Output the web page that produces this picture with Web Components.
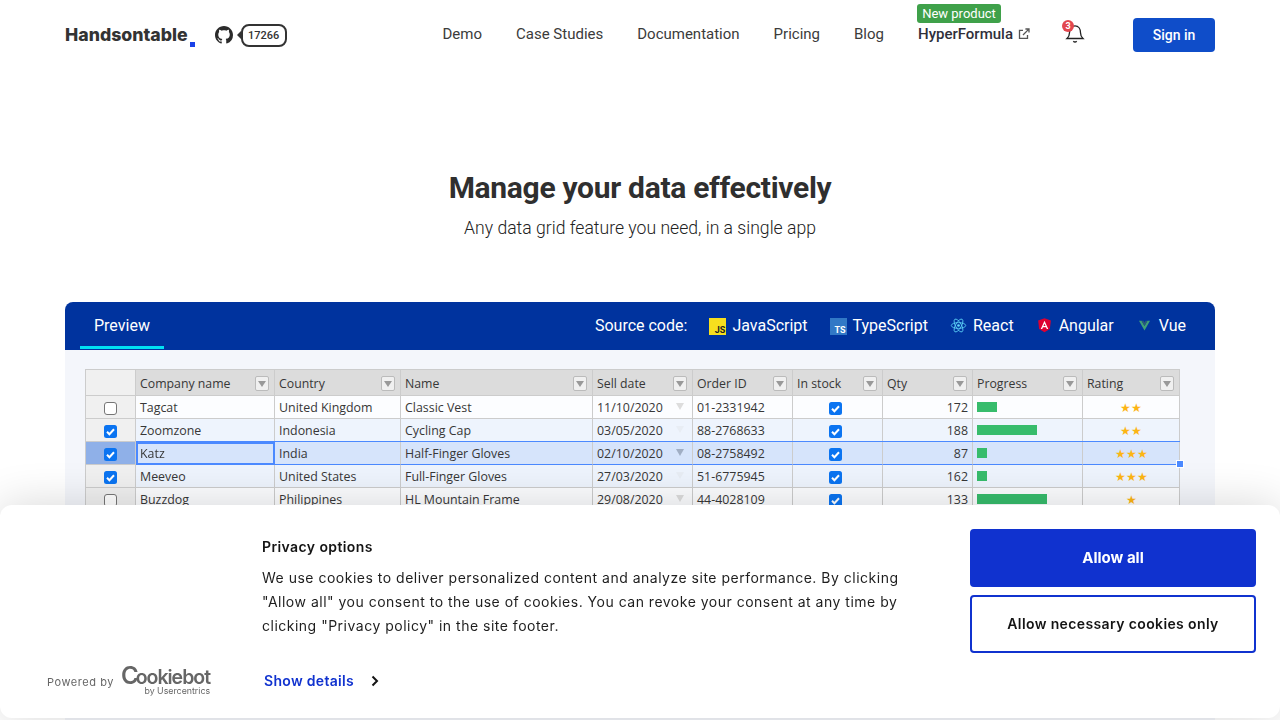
<!DOCTYPE html>
<html lang="en">
<head>
<meta charset="utf-8">
<title>Handsontable</title>
<style>
  html, body { margin: 0; height: 720px; overflow: hidden; background: #fff; }
  body { font-family: Roboto, "Liberation Sans", sans-serif; color: #373737; }
</style>
</head>
<body>
<site-header></site-header>
<hero-title>
  <span slot="title">Manage your data effectively</span>
  <span slot="sub">Any data grid feature you need, in a single app</span>
</hero-title>
<demo-panel>
  <data-grid></data-grid>
</demo-panel>
<cookie-banner></cookie-banner>

<script>
// top navigation
class SiteHeader extends HTMLElement {
  connectedCallback() {
    const shadow = this.attachShadow({ mode: 'open' });
    shadow.innerHTML = `
      <style>
        :host { display: flex; align-items: center; height: 70px; padding: 0 65px; font-family: Roboto, sans-serif; }
        .logo { font: 800 17.7px/22px Inter, sans-serif; color: #333; display: flex; align-items: baseline; }
        .logo i { display: block; align-self: flex-end; width: 5px; height: 5px; background: #1a42e8; margin-left: 2px; margin-bottom: -1px; }
        .gh { display: flex; align-items: center; margin-left: 20px; }
        .gh svg { width: 18px; height: 18px; fill: #2b2b2b; }
        .count { position: relative; box-sizing: border-box; margin-left: 8px; height: 23px; width: 46px; border: 2px solid #333; border-radius: 8px;
          font: 500 11px Roboto, sans-serif; color: #333; display: flex; align-items: center; justify-content: center; }
        .count::before { content: ""; position: absolute; left: -6px; top: 5px; border: 4px solid transparent; border-left: 0; border-right: 4px solid #333; }
        nav { display: flex; align-items: center; gap: 34px; margin-left: auto; font-size: 15px; color: #3b3b3b; padding-bottom: 2px; }
        .hf { position: relative; font-weight: 500; color: #2f2f3a; display: flex; align-items: center; gap: 5px; }
        .hf svg { width: 12px; height: 12px; }
        .new { position: absolute; left: -1px; top: -21px; height: 19px; width: 84px; background: #3fa14a; color: #fff; border-radius: 3px;
          font-size: 13px; font-weight: 400; line-height: 19px; text-align: center; }
        .bell { position: relative; width: 20px; height: 20px; margin: -2px 0 0 1px; }
        .bell svg { display: block; width: 20px; height: 20px; }
        .bell b { position: absolute; left: -3px; top: -3px; width: 12px; height: 12px; border-radius: 50%; background: #e2474f; color: #fff;
          font: 700 9px/12px Roboto, sans-serif; text-align: center; }
        .signin { margin-left: 48px; width: 82px; height: 34px; background: #0f4dc9; color: #fff; border-radius: 4px; font-size: 14px; font-weight: 500;
          display: flex; align-items: center; justify-content: center; }
      </style>
      <div class="logo">Handsontable<i></i></div>
      <div class="gh">
        <svg viewBox="0 0 16 16"><path d="M8 0C3.58 0 0 3.58 0 8c0 3.54 2.29 6.53 5.47 7.59.4.07.55-.17.55-.38 0-.19-.01-.82-.01-1.49-2.01.37-2.53-.49-2.69-.94-.09-.23-.48-.94-.82-1.13-.28-.15-.68-.52-.01-.53.63-.01 1.08.58 1.23.82.72 1.21 1.87.87 2.33.66.07-.52.28-.87.51-1.07-1.78-.2-3.64-.89-3.64-3.95 0-.87.31-1.59.82-2.15-.08-.2-.36-1.02.08-2.12 0 0 .67-.21 2.2.82.64-.18 1.32-.27 2-.27.68 0 1.36.09 2 .27 1.53-1.04 2.2-.82 2.2-.82.44 1.1.16 1.92.08 2.12.51.56.82 1.27.82 2.15 0 3.07-1.87 3.75-3.65 3.95.29.25.54.73.54 1.48 0 1.07-.01 1.93-.01 2.2 0 .21.15.46.55.38A8.013 8.013 0 0016 8c0-4.42-3.58-8-8-8z"/></svg>
        <div class="count">17266</div>
      </div>
      <nav>
        <span>Demo</span>
        <span>Case Studies</span>
        <span>Documentation</span>
        <span>Pricing</span>
        <span>Blog</span>
        <span class="hf"><span class="new">New product</span>HyperFormula
          <svg viewBox="0 0 12 12" fill="none" stroke="#555" stroke-width="1.3"><path d="M9.5 7v3.4h-8v-8H5"/><path d="M5 7l5.6-5.6M7.4 1h3.6v3.6"/></svg>
        </span>
        <span class="bell">
          <svg viewBox="0 0 20 20" fill="none" stroke="#222" stroke-width="1.3"><path d="M2 15.500c1.700-1.500 2.500-3 2.500-5.700C4.500 6 6.500 2.800 10 2.800s5.500 3.200 5.500 7c0 2.700.8 4.200 2.500 5.700z"/><path d="M8.300 18.200c.8.7 2.600.7 3.400 0" stroke-width="1.500"/></svg>
          <b>3</b>
        </span>
      </nav>
      <div class="signin">Sign in</div>
    `;
  }
}

class HeroTitle extends HTMLElement {
  connectedCallback() {
    const shadow = this.attachShadow({ mode: 'open' });
    shadow.innerHTML = `
      <style>
        :host { display: block; text-align: center; padding-top: 98px; height: 134px; }
        .t { font: 700 30px/40px Roboto, sans-serif; color: #2f2f2f; letter-spacing: -.3px; }
        .s { font: 300 17.6px/28px Roboto, sans-serif; color: #222; margin-top: 6px; }
      </style>
      <div class="t"><slot name="title"></slot></div>
      <div class="s"><slot name="sub"></slot></div>
    `;
  }
}

// the dark tab bar and the light area under it
class DemoPanel extends HTMLElement {
  connectedCallback() {
    const shadow = this.attachShadow({ mode: 'open' });
    shadow.innerHTML = `
      <style>
        :host { display: block; margin: 0 65px; font-family: Roboto, sans-serif; }
        .bar { display: flex; align-items: stretch; height: 48px; background: #00339e; border-radius: 8px 8px 0 0; color: #fff; font-size: 16px; padding: 0 29px 0 15px; }
        .tab { box-sizing: border-box; width: 84px; padding: 14px 0 0 14px; border-bottom: 3px solid #00e1f2; height: 47px; font-size: 16px; }
        .src { margin-left: auto; display: flex; align-items: center; gap: 22px; padding-bottom: 2px; }
        .src > span { display: flex; align-items: center; gap: 6px; }
        svg, .sq { display: block; width: 17px; height: 17px; flex: none; }
        .sq { position: relative; font: 700 9px Roboto, sans-serif; top: 1px; }
        .sq em { position: absolute; right: 1px; bottom: 0; font-style: normal; line-height: 10px; }
        .js { background: #f7df1e; color: #222; }
        .ts { background: #3178c6; color: #fff; }
        .body { box-sizing: border-box; background: #f4f6fb; padding: 19px 20px 0; height: 370px; overflow: hidden; }
      </style>
      <div class="bar">
        <div class="tab">Preview</div>
        <div class="src">
          <span>Source code:</span>
          <span><i class="sq js"><em>JS</em></i>JavaScript</span>
          <span><i class="sq ts"><em>TS</em></i>TypeScript</span>
          <span>
            <svg viewBox="0 0 20 20" fill="none" stroke="#61dafb" stroke-width=".9"><ellipse cx="10" cy="10" rx="8.5" ry="3.4"/><ellipse cx="10" cy="10" rx="8.5" ry="3.4" transform="rotate(60 10 10)"/><ellipse cx="10" cy="10" rx="8.5" ry="3.4" transform="rotate(120 10 10)"/><circle cx="10" cy="10" r="1.6" fill="#61dafb" stroke="none"/></svg>
            React</span>
          <span>
            <svg viewBox="0 0 20 20"><path d="M10 1.5 2.5 4.2l1.2 10L10 18l6.3-3.8 1.2-10z" fill="#dd0031"/><path d="M10 4.5 5.6 14.2h1.7l.9-2.2h3.6l.9 2.2h1.7zm-1.2 6.1L10 7.800l1.200 2.800z" fill="#fff"/></svg>
            Angular</span>
          <span>
            <svg viewBox="0 0 20 20"><path d="M3.500 4.500h3L10 10.500l3.500-6h3L10 16z" fill="#3f9f78"/><path d="M6.500 4.500h2.200L10 6.800l1.300-2.300h2.200L10 10.500z" fill="#2c5a78"/></svg>
            Vue</span>
        </div>
      </div>
      <div class="body"><slot></slot></div>
    `;
  }
}

const ROWS = [
  [false, 'Tagcat', 'United Kingdom', 'Classic Vest', '11/10/2020', '01-2331942', 172, 20, 2],
  [true, 'Zoomzone', 'Indonesia', 'Cycling Cap', '03/05/2020', '88-2768633', 188, 60, 2],
  [true, 'Katz', 'India', 'Half-Finger Gloves', '02/10/2020', '08-2758492', 87, 10, 3],
  [true, 'Meeveo', 'United States', 'Full-Finger Gloves', '27/03/2020', '51-6775945', 162, 10, 3],
  [false, 'Buzzdog', 'Philippines', 'HL Mountain Frame', '29/08/2020', '44-4028109', 133, 70, 1]
];
const HEADS = ['Company name', 'Country', 'Name', 'Sell date', 'Order ID', 'In stock', 'Qty', 'Progress', 'Rating'];

class DataGrid extends HTMLElement {
  connectedCallback() {
    const shadow = this.attachShadow({ mode: 'open' });
    const check = on => on
      ? '<svg class="cb" viewBox="0 0 13 13"><rect width="13" height="13" rx="2.500" fill="#0b74f1"/><path d="M3 6.800l2.400 2.400L10 4.300" fill="none" stroke="#fff" stroke-width="2"/></svg>'
      : '<svg class="cb" viewBox="0 0 13 13"><rect x=".5" y=".5" width="12" height="12" rx="2.500" fill="#fff" stroke="#767676"/></svg>';
    let html = '<div class="c hd rh"></div>';
    HEADS.forEach(h => { html += `<div class="c hd"><span>${h}</span><i class="btn"></i></div>`; });
    ROWS.forEach((r, i) => {
      const cls = i === 2 ? 'sel' : (i % 2 ? 'alt' : '');
      html += `<div class="c rh mid ${i === 2 ? 'rhsel' : ''}">${check(r[0])}</div>
        <div class="c ${cls} ${i === 2 ? 'cur' : ''}">${r[1]}</div>
        <div class="c ${cls}">${r[2]}</div>
        <div class="c ${cls}">${r[3]}</div>
        <div class="c ${cls} date">${r[4]}<i class="arrow"></i></div>
        <div class="c ${cls}">${r[5]}</div>
        <div class="c ${cls} mid stock">${check(true)}</div>
        <div class="c ${cls} num">${r[6]}</div>
        <div class="c ${cls} bar"><i style="width:${r[7]}px"></i></div>
        <div class="c ${cls} mid star">${'★'.repeat(r[8])}${i === 2 ? '<u></u>' : ''}</div>`;
    });
    shadow.innerHTML = `
      <style>
        :host { display: block; font: 12.4px "Open Sans", sans-serif; color: #373737; }
        .g { display: grid; grid-template-columns: 50px 139px 126px 192px 100px 100px 90px 90px 110px 97px; grid-auto-rows: 23px; grid-template-rows: 26px;
          width: 1095px; border-top: 1px solid #ccc; border-left: 1px solid #ccc; box-sizing: border-box; }
        .c { position: relative; box-sizing: border-box; border-right: 1px solid #ccc; border-bottom: 1px solid #ccc; background: #fcfdff; padding: 0 4px; display: flex; align-items: center; white-space: nowrap; }
        .hd { background: #dcdcdc; justify-content: space-between; padding: 1px 5px 0 4px; font-size: 12.3px; }
        .rh { background: #f0f0f0; }
        .rhsel { background: #8fb0e8; }
        .alt { background: #eef4fd; }
        .sel { background: #d6e4fb; border-bottom-color: #4b89ff; box-shadow: 0 -1px 0 #4b89ff; }
        .cur { outline: 2px solid #4b89ff; outline-offset: -2px; z-index: 1; }
        .mid { justify-content: center; padding: 0; }
        .mid svg { margin-top: 2px; }
        .stock svg { margin-right: 4px; }
        .num { justify-content: flex-end; }
        .btn { position: relative; display: block; box-sizing: border-box; width: 14px; height: 15px; background: #f0f0f0; border: 1px solid #bbb; border-radius: 2px; }
        .btn::after { content: ""; position: absolute; left: 2px; top: 4px; border: 4px solid transparent; border-top: 6px solid #999; border-bottom: 0; }
        .arrow { position: absolute; right: 8px; top: 7px; border: 4.500px solid transparent; border-top: 7px solid #ddd; border-bottom: 0; }
        .sel .arrow { border-top-color: #a0aec4; }
        .alt .arrow { border-top-color: #e8edf4; }
        .cb { display: block; width: 13px; height: 13px; }
        .bar { padding: 0 4px; }
        .bar i { display: block; height: 10px; background: #37bc6c; }
        .star { color: #fcb515; font-size: 12.4px; }
        u { position: absolute; right: -5px; bottom: -4px; width: 8px; height: 8px; box-sizing: border-box; background: #4b89ff; border: 1px solid #fff; z-index: 2; }
      </style>
      <div class="g">${html}</div>
    `;
  }
}

class CookieBanner extends HTMLElement {
  connectedCallback() {
    const shadow = this.attachShadow({ mode: 'open' });
    shadow.innerHTML = `
      <style>
        :host { position: fixed; left: 0; right: 0; bottom: 2px; height: 213px; background: #fff; border-radius: 12px; box-shadow: 0 0 45px rgba(0,0,0,.16);
          display: grid; grid-template-columns: 262px 1fr 286px; padding-right: 24px; box-sizing: border-box; font-family: Inter, sans-serif; color: #141414; }
        .brand { display: flex; align-items: flex-start; padding: 161px 0 0 47px; color: #666; font-size: 11px; letter-spacing: .55px; }
        .brand span { margin-top: 9px; }
        .cb { margin-left: 7px; text-align: right; color: #666; letter-spacing: 0; }
        .cb b { display: block; font: 600 19.5px/20px Inter, sans-serif; letter-spacing: -1px; }
        .cb b em { font-style: normal; font-size: 24px; line-height: 20px; letter-spacing: -3px; }
        .cb small { display: block; font-size: 8.8px; line-height: 8px; letter-spacing: 0; }
        .text { padding-top: 33px; }
        h2 { margin: 0 0 10px; font-size: 14px; line-height: 18px; font-weight: 600; letter-spacing: .4px; }
        p { margin: 0; width: 645px; font-size: 14px; line-height: 24px; letter-spacing: .5px; color: #1e1e1e; }
        .show { display: flex; align-items: center; margin-top: 34px; color: #1032cf; font-size: 14px; font-weight: 600; letter-spacing: .3px; line-height: 18px; margin-left: 2px; }
        .show svg { width: 8px; height: 12px; margin-left: 17px; }
        .btns { padding-top: 24px; display: flex; flex-direction: column; gap: 8px; }
        .b { box-sizing: border-box; height: 58px; padding-bottom: 2px; border: 2px solid #1032cf; border-radius: 4px; display: flex; align-items: center; justify-content: center;
          font-size: 14px; font-weight: 600; letter-spacing: .38px; }
        .all { background: #1032cf; color: #fff; letter-spacing: 0; font-weight: 700; font-size: 15px; }
      </style>
      <div class="brand">
        <span>Powered by</span>
        <div class="cb"><b><em>C</em>ookiebot</b><small>by Usercentrics</small></div>
      </div>
      <div class="text">
        <h2>Privacy options</h2>
        <p>We use cookies to deliver personalized content and analyze site performance. By clicking "Allow all" you consent to the use of cookies. You can revoke your consent at any time by clicking "Privacy policy" in the site footer.</p>
        <div class="show">Show details
          <svg viewBox="0 0 8 12" fill="none" stroke="#141414" stroke-width="2"><path d="M1.500 1.500 6 6l-4.500 4.500"/></svg>
        </div>
      </div>
      <div class="btns">
        <div class="b all">Allow all</div>
        <div class="b">Allow necessary cookies only</div>
      </div>
    `;
  }
}

customElements.define('site-header', SiteHeader);
customElements.define('hero-title', HeroTitle);
customElements.define('demo-panel', DemoPanel);
customElements.define('data-grid', DataGrid);
customElements.define('cookie-banner', CookieBanner);
</script>
</body>
</html>
